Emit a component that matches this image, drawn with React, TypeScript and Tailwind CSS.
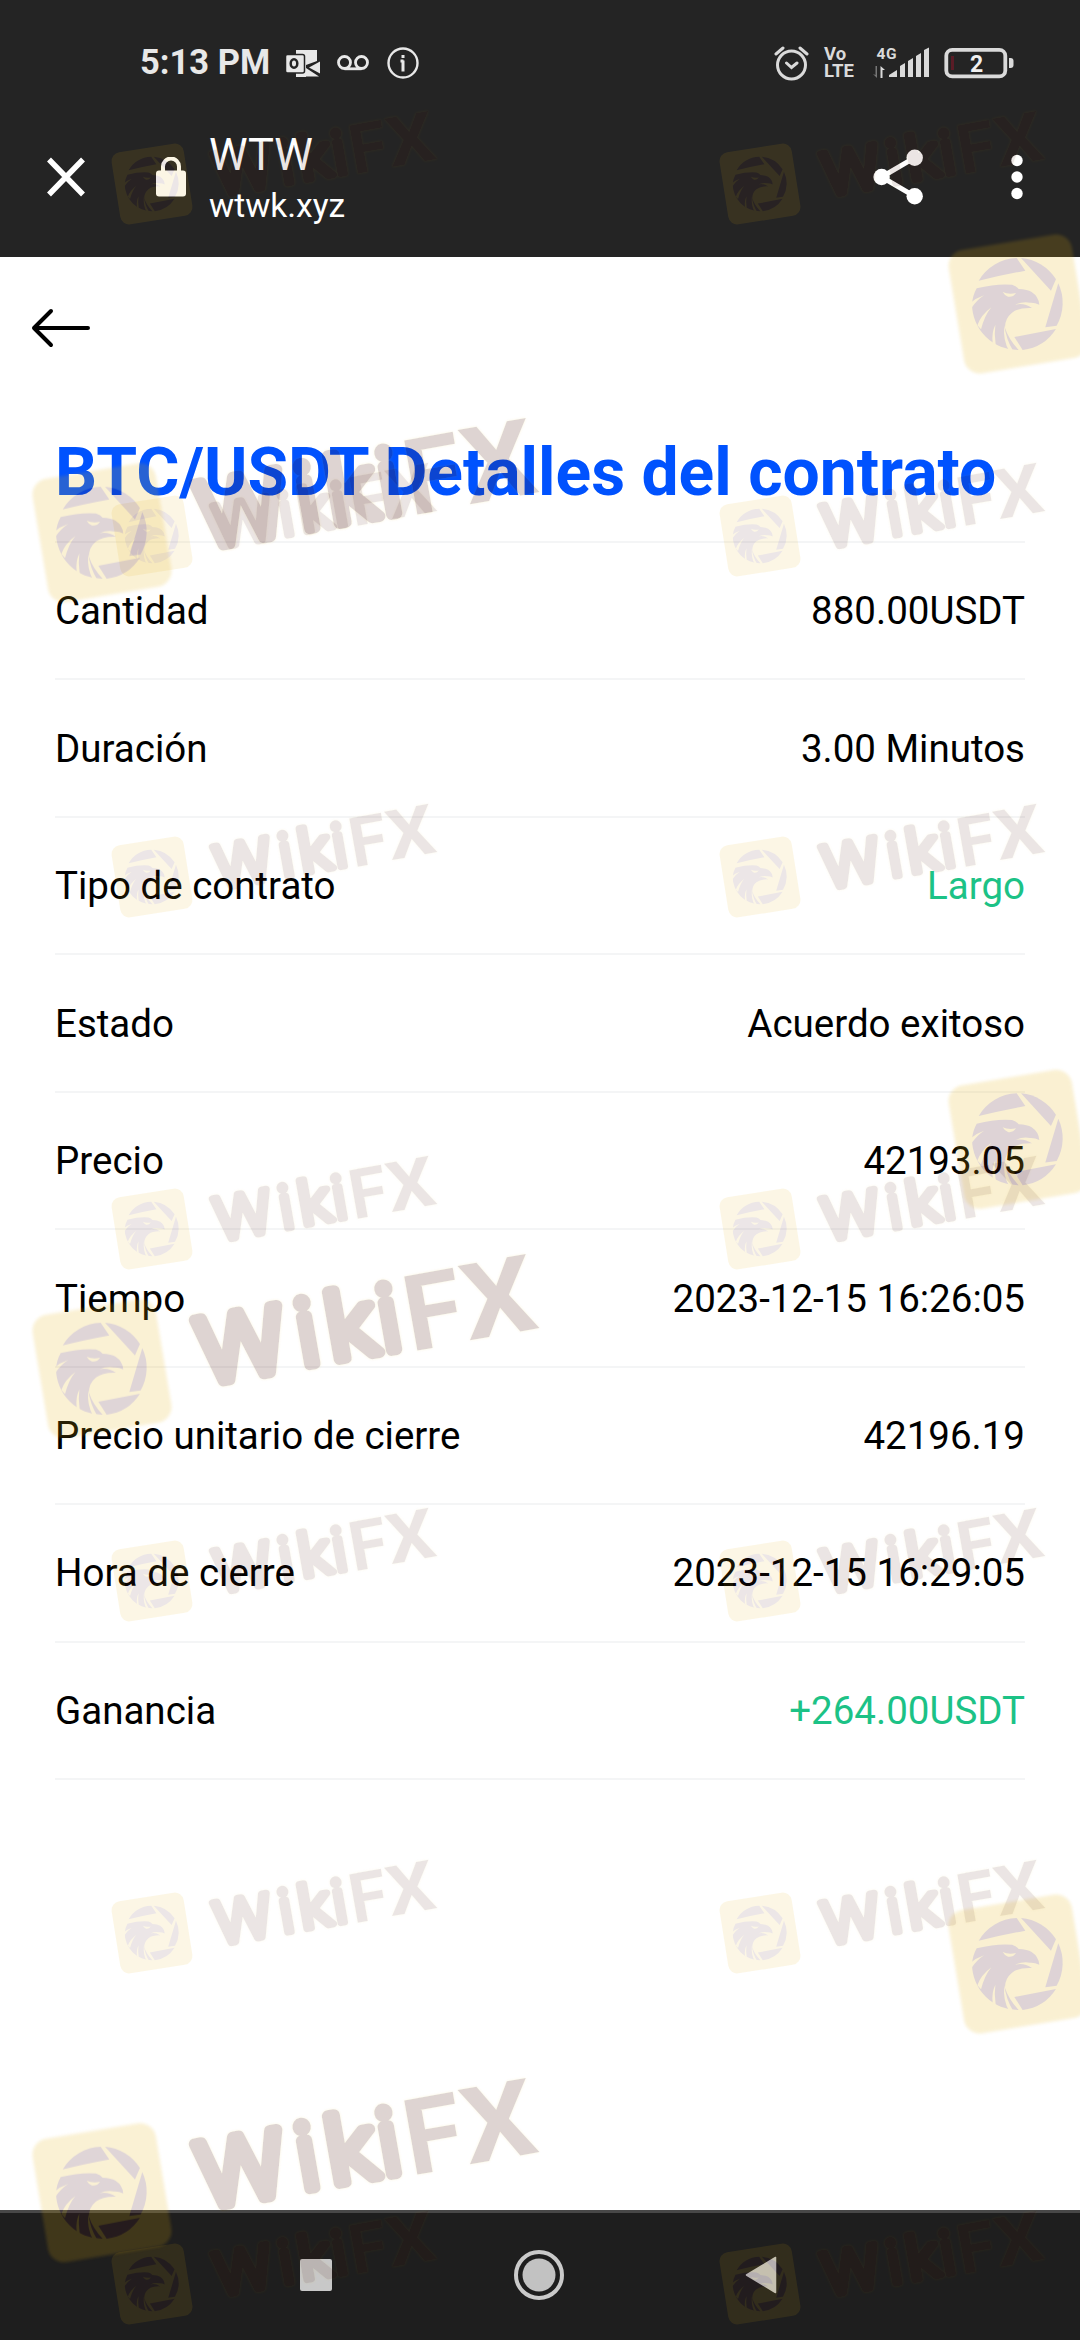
const YELLOW = "#e4b010";
const MARK = "#440c06";

const rows = [
  { label: "Cantidad", value: "880.00USDT" },
  { label: "Duración", value: "3.00 Minutos" },
  { label: "Tipo de contrato", value: "Largo", green: true },
  { label: "Estado", value: "Acuerdo exitoso" },
  { label: "Precio", value: "42193.05" },
  { label: "Tiempo", value: "2023-12-15 16:26:05" },
  { label: "Precio unitario de cierre", value: "42196.19" },
  { label: "Hora de cierre", value: "2023-12-15 16:29:05" },
  { label: "Ganancia", value: "+264.00USDT", green: true },
];

const smallRows = [184, 536, 877, 1229, 1581, 1933, 2284];

// the ones on the right edge only have room for the emblem
const largeMarks = [
  { x: 1018, y: 304, words: false },
  { x: 102, y: 532.7, words: true },
  { x: 1018, y: 1139.3, words: false },
  { x: 102, y: 1368.7, words: true },
  { x: 1018, y: 1964, words: false },
  { x: 102, y: 2192.7, words: true },
];

function Eagle({ scale }: { scale: number }) {
  return (
    <g transform={`scale(${scale}) translate(-204 -220)`}>
      <g fill="#4c1420">
        <path d="M86 150A138 138 0 0 1 200 82L226 120Q150 134 86 150Z" />
        <path d="M213 82A138 138 0 0 1 318 146L303 180L213 82Z" />
        <path d="M325 158A138 138 0 0 1 320 285L286 290Z" />
        <path d="M318 295A138 138 0 0 1 218 358L193 319Z" />
        <path d="M80 173Q140 158 186 162Q200 166 206 175Q232 176 245 184Q266 198 268 222Q254 215 240 216Q218 212 196 222Q222 216 246 232Q208 230 186 246Q164 264 165 292Q176 326 206 358A138 138 0 0 1 66 220Q68 194 80 173Z" />
      </g>
      <g fill={YELLOW}>
        <path d="M158 184Q176 192 198 187Q188 201 174 198Q164 195 158 184Z" />
        <path d="M60 218Q78 202 102 194Q82 207 64 232Z" />
        <path d="M82 284Q92 254 124 230Q104 254 93 296Z" />
        <path d="M128 338Q124 306 136 282Q132 310 137 342Z" />
        <path d="M163 284Q158 330 178 362L190 362Q168 326 163 284Z" />
      </g>
    </g>
  );
}

// Brand words lean 10 degrees, the origin is the centre of the round emblem
function Wordmark({ scale, dy = 0 }: { scale: number; dy?: number }) {
  return (
    <g
      transform={`rotate(-10) scale(${scale}) translate(0 ${dy})`}
      fontFamily="Roboto, sans-serif"
      fill={MARK}
      stroke={MARK}
      strokeLinejoin="round"
      strokeLinecap="round"
    >
      <g fontSize="91" fontWeight="300" strokeWidth="11.5">
        <text x="97" y="33" textLength="88" lengthAdjust="spacingAndGlyphs">W</text>
        <text x="198" y="32" textLength="20" lengthAdjust="spacingAndGlyphs">i</text>
        <text x="228.5" y="32" textLength="48" lengthAdjust="spacingAndGlyphs">k</text>
        <text x="281" y="32" textLength="20" lengthAdjust="spacingAndGlyphs">i</text>
      </g>
      <g fontSize="106" fontWeight="700" strokeWidth="0">
        <text x="307" y="37">F</text>
        <text x="366" y="36" textLength="73" lengthAdjust="spacingAndGlyphs">X</text>
      </g>
    </g>
  );
}

function Watermarks() {
  return (
    <svg className="absolute inset-0 pointer-events-none" width="1080" height="2340" viewBox="0 0 1080 2340">
      <defs>
        <filter id="soft" x="-10%" y="-10%" width="120%" height="120%">
          <feGaussianBlur stdDeviation="1.8" />
        </filter>
        <filter id="halo" x="-5%" y="-5%" width="110%" height="110%">
          <feDropShadow dx="0" dy="0" stdDeviation="1.4" floodColor={YELLOW} floodOpacity="0.6" />
        </filter>
      </defs>
      {smallRows.map((y) =>
        [152, 760].map((x) => (
          <g key={`${x}-${y}`} transform={`translate(${x} ${y})`} opacity="0.1">
            <rect x="-36.5" y="-36.5" width="73" height="73" rx="9" fill={YELLOW} transform="rotate(-9)" />
            <Eagle scale={0.198} />
            <g filter="url(#halo)">
              <Wordmark scale={0.652} dy={2.5} />
            </g>
          </g>
        ))
      )}
      {largeMarks.map(({ x, y, words }) => (
        <g key={`${x}-${y}`} transform={`translate(${x} ${y})`} opacity="0.18">
          <rect x="-62.5" y="-62.5" width="125" height="125" rx="16" fill={YELLOW} transform="rotate(-9.5)" filter="url(#soft)" />
          <Eagle scale={0.333} />
          {words && (
            <g filter="url(#halo)">
              <Wordmark scale={1} />
            </g>
          )}
        </g>
      ))}
    </svg>
  );
}

function StatusBar() {
  return (
    <div className="flex h-[97px] items-center pt-[28px] pl-[140px] pr-[66px] text-[#e8e8e8]">
      <span className="w-[146px] whitespace-nowrap text-[34.5px] font-bold leading-none">5:13 PM</span>
      <svg width="34" height="28" viewBox="286 47 34 28">
        <path d="M296 48h21v11l-11 4v12h-10zM306 66l13 8.500h-20V72h7zM320 59.500v12l-11-6z" fill="currentColor" />
        <rect x="285.500" y="52.500" width="19" height="18.500" rx="2" fill="currentColor" stroke="#242424" strokeWidth="1.500" />
        <ellipse cx="294" cy="61.500" rx="3.300" ry="4.200" fill="none" stroke="#242424" strokeWidth="2.500" />
      </svg>
      <svg className="ml-[17px]" width="32" height="18" viewBox="0 0 32 18" fill="none" stroke="currentColor" strokeWidth="2.800">
        <circle cx="7.500" cy="8.500" r="6" />
        <circle cx="24.500" cy="8.500" r="6" />
        <path d="M7.500 14.800h17" />
      </svg>
      <svg className="ml-[18px]" width="32" height="32" viewBox="0 0 32 32" fill="none" stroke="currentColor">
        <circle cx="16" cy="16" r="14.500" strokeWidth="2.400" />
        <path d="M16 13.500v11M13.500 14h3M16 8v3" strokeWidth="3" />
      </svg>
      <div className="ml-auto flex items-center text-[#dadada]">
        <svg width="35" height="36" viewBox="773 44 35 36" fill="none" stroke="currentColor" strokeWidth="3" strokeLinecap="round">
          <circle cx="790.500" cy="64" r="14" />
          <path d="M775 53l7-6M806 53l-7-6M785.500 62l5 4.500 5.500-4.500" />
        </svg>
        <div className="ml-[15px] flex w-[34px] flex-col text-[18.500px] font-bold leading-[17px]">
          <span>Vo</span>
          <span>LTE</span>
        </div>
        <svg className="ml-[14px]" width="58" height="34" viewBox="871 45 58 34" fill="currentColor">
          <text x="875.500" y="57.500" fontSize="15.500" fontWeight="700" fontFamily="Roboto, sans-serif" textLength="20">4G</text>
          <path d="M872 73l4 4V65h-1.500v9z" fill="#777" />
          <path d="M879.500 77V65l4.500 4h-2.500v8z" />
          <path d="M888 76v-2l8-5v7zM899 76V65l5-3v14zM907 76V60l5-3v19zM915 76V55l5-3v24zM923 76V49l5-2.500V76z" />
        </svg>
        <svg className="ml-[14px]" width="70" height="32" viewBox="943 46 70 32">
          <rect x="945.300" y="48.800" width="59" height="26.600" rx="6" fill="none" stroke="currentColor" strokeWidth="3.800" />
          <path d="M1008 57h1.500a3 3 0 0 1 3 3v4a3 3 0 0 1-3 3h-1.500z" fill="currentColor" />
          <path d="M951.500 55v14" stroke="#5a1c26" strokeWidth="3" />
          <text x="975.500" y="70.500" textAnchor="middle" fontSize="23" fontWeight="700" fontFamily="Roboto, sans-serif" fill="#f0f0f0">2</text>
        </svg>
      </div>
    </div>
  );
}

function Toolbar() {
  return (
    <div className="flex h-[160px] items-center pl-[47px] pr-[57px] text-white">
      <svg width="38" height="40" viewBox="0 0 38 40" stroke="currentColor" strokeWidth="5.500">
        <path d="M2 2.500l34 35M36 2.500l-34 35" />
      </svg>
      <svg className="ml-[71px]" width="30" height="40" viewBox="0 0 30 40">
        <rect y="13.500" width="30" height="26" rx="3" fill="currentColor" />
        <path d="M7 15V9.500a8 8 0 0 1 16 0V15" fill="none" stroke="currentColor" strokeWidth="4" />
      </svg>
      <div className="ml-[23px] flex flex-col pt-[8px]">
        <span className="text-[43.500px] leading-[50px]">WTW</span>
        <span className="text-[33.500px] leading-[50px]">wtwk.xyz</span>
      </div>
      <svg className="ml-auto" width="50" height="56" viewBox="873 149 50 56" fill="currentColor">
        <path d="M914.700 157.700L881.600 177l33.100 19.300" fill="none" stroke="currentColor" strokeWidth="5" />
        <circle cx="914.700" cy="157.700" r="8.200" />
        <circle cx="881.600" cy="177" r="8.200" />
        <circle cx="914.700" cy="196.300" r="8.200" />
      </svg>
      <svg className="ml-[88px]" width="12" height="46" viewBox="0 0 12 46" fill="currentColor">
        <circle cx="6" cy="6.500" r="5.700" />
        <circle cx="6" cy="23" r="5.700" />
        <circle cx="6" cy="39.500" r="5.700" />
      </svg>
    </div>
  );
}

export default function App() {
  return (
    <div className="relative flex h-[2340px] w-[1080px] flex-col overflow-hidden bg-white font-['Roboto',sans-serif]">
      <header className="h-[257px] shrink-0 bg-[#242424]">
        <StatusBar />
        <Toolbar />
      </header>

      <main className="flex-1 text-black">
        <div className="flex h-[142px] items-center pl-[31px]">
          <svg width="59" height="40" viewBox="0 0 59 40" fill="none" stroke="currentColor" strokeWidth="4" strokeLinecap="round" strokeLinejoin="round">
            <path d="M57 20H3M20 3L3 20l17 17" />
          </svg>
        </div>
        <div className="px-[55px]">
          <h1 className="flex h-[144px] items-center whitespace-nowrap border-b-[2px] border-[#f4f5f6] pt-[4px] text-[66px] font-bold text-[#0052fe]">
            BTC/USDT Detalles del contrato
          </h1>
          {rows.map((row) => (
            <div key={row.label} className="flex h-[137.450px] items-center justify-between border-b-[2px] border-[#f4f5f6] pt-px text-[38.500px]">
              <span>{row.label}</span>
              <span className={row.green ? "text-[#1cc286]" : "text-black"}>{row.value}</span>
            </div>
          ))}
        </div>
      </main>

      <nav className="flex h-[130px] shrink-0 items-center border-t-[3px] border-[#484848] bg-[#1e1e1e] pb-[3px] pl-[300px] text-[#c2c2c2]">
        <div className="h-[32px] w-[32px] rounded-[2px] bg-[#c8c8c8]" />
        <svg className="ml-[182px]" width="50" height="50" viewBox="0 0 50 50">
          <circle cx="25" cy="25" r="23" fill="none" stroke="#cacaca" strokeWidth="4" />
          <circle cx="25" cy="25" r="16.500" fill="currentColor" />
        </svg>
        <svg className="ml-[181px]" width="32" height="38" viewBox="0 0 32 38" fill="currentColor">
          <path d="M30.500 1.500v35L1.500 19z" stroke="currentColor" strokeWidth="1.500" strokeLinejoin="round" />
        </svg>
      </nav>

      <Watermarks />
    </div>
  );
}
